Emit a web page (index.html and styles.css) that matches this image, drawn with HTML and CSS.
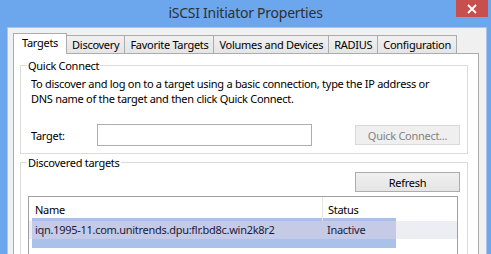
FILE: index.html
```html
<!DOCTYPE html>
<html lang="en">

<head>
    <meta charset="UTF-8">
    <meta name="viewport" content="width=device-width, initial-scale=1.0">
    <title>iSCSI Initiator Properties</title>
    <link rel="stylesheet" href="styles.css">
</head>

<body>
    <div class="window">
        <div class="titlebar">
            <span></span>
            <h1 class="title">iSCSI Initiator Properties</h1>
            <button class="close" aria-label="Close">
                <svg width="10" height="10" viewBox="0 0 10 10">
                    <path d="M1 1 L9 9 M9 1 L1 9" stroke="#fff" stroke-width="1.8" />
                </svg>
            </button>
        </div>

        <div class="client">
            <ul class="tabs">
                <li class="tab active">Targets</li>
                <li class="tab">Discovery</li>
                <li class="tab">Favorite Targets</li>
                <li class="tab">Volumes and Devices</li>
                <li class="tab">RADIUS</li>
                <li class="tab">Configuration</li>
            </ul>

            <div class="panel">
                <fieldset class="group quick">
                    <legend>Quick Connect</legend>
                    <p class="hint">To discover and log on to a target using a basic connection, type the IP address or<br>
                        DNS name of the target and then click Quick Connect.</p>
                    <div class="target-row">
                        <label for="target">Target:</label>
                        <input type="text" id="target">
                        <button class="btn" disabled>Quick Connect...</button>
                    </div>
                </fieldset>

                <fieldset class="group discovered">
                    <legend>Discovered targets</legend>
                    <div class="btn-row">
                        <button class="btn">Refresh</button>
                    </div>
                    <div class="list">
                        <div class="drag-box"></div>
                        <div class="list-row head">
                            <span class="col-name">Name</span>
                            <span class="col-status">Status</span>
                        </div>
                        <div class="list-row item">
                            <span class="col-name">iqn.1995-11.com.unitrends.dpu:flr.bd8c.win2k8r2</span>
                            <span class="col-status">Inactive</span>
                        </div>
                    </div>
                </fieldset>
            </div>
        </div>
    </div>
</body>

</html>
```

FILE: styles.css
```css
body {
    margin: 0;
    padding: 0;
    width: 491px;
    height: 254px;
    overflow: hidden;
    background-color: #6ca6ec;
    font-family: "Noto Sans", "Open Sans", sans-serif;
    font-size: 11px;
    letter-spacing: -0.28px;
    color: #000;
}

.window {
    display: flex;
    flex-direction: column;
    height: 254px;
    overflow: hidden;
}

.titlebar {
    display: grid;
    grid-template-columns: 1fr auto 1fr;
    align-items: start;
    height: 27px;
    flex-shrink: 0;
}

.title {
    margin: 0;
    padding-top: 3px;
    font-size: 14px;
    font-weight: normal;
    letter-spacing: -0.25px;
    line-height: 20px;
    color: #303030;
}

.close {
    justify-self: end;
    width: 32px;
    height: 17px;
    margin-right: 3px;
    padding: 0;
    border: none;
    background-color: #c7504f;
    display: flex;
    align-items: center;
    justify-content: center;
}

.client {
    flex: 1;
    min-height: 0;
    margin: 0 4px 0 7px;
    border: 1px solid #a9c3e4;
    border-bottom: none;
    background-color: #f0f0f0;
    padding: 5px 7px 0 5px;
    display: flex;
    flex-direction: column;
}

.tabs {
    list-style: none;
    margin: 0;
    padding: 0;
    display: flex;
    align-items: flex-end;
    height: 20px;
    flex-shrink: 0;
    position: relative;
    z-index: 1;
}

.tab {
    height: 17px;
    line-height: 18px;
    padding: 0 5px;
    border: 1px solid #acacac;
    border-bottom: none;
    border-left: none;
    background: linear-gradient(#f0f0f0, #e5e5e5);
    white-space: nowrap;
}

.tab.active {
    height: 20px;
    line-height: 18px;
    padding: 0 8px;
    border-left: 1px solid #acacac;
    background: #fff;
    margin-bottom: -1px;
}

.panel {
    flex: 1;
    min-height: 0;
    background-color: #fff;
    border: 1px solid #acacac;
    border-bottom: none;
    padding: 4px 10px 0 6px;
}

.group {
    margin: 0;
    border: 1px solid #dcdcdc;
    padding: 0 7px 7px 7px;
}

.group legend {
    padding: 0 1px;
    margin-left: -1px;
    line-height: 15px;
}

.hint {
    margin: 3px 0 0 3px;
    line-height: 15px;
}

.target-row {
    display: flex;
    align-items: center;
    margin-top: 18px;
}

.target-row label {
    width: 66px;
    padding-left: 3px;
}

.target-row input {
    width: 215px;
    height: 22px;
    box-sizing: border-box;
    border: 1px solid #abadb3;
    margin: 0;
}

.btn {
    width: 105px;
    height: 20px;
    margin-left: auto;
    padding: 0;
    font-family: inherit;
    font-size: 11px;
    letter-spacing: inherit;
    color: #000;
    border: 1px solid #acacac;
    background: linear-gradient(#f0f0f0, #e5e5e5);
}

.btn:disabled {
    color: #838383;
    border-color: #d9d9d9;
    background: #efefef;
}

.discovered {
    margin-top: 1px;
    padding-bottom: 0;
}

.btn-row {
    display: flex;
    margin-top: 2px;
}

.list {
    position: relative;
    margin: 4px 2px 0 0;
    height: 60px;
    border: 1px solid #a0a0a0;
    border-bottom: none;
}

.list-row {
    display: flex;
    position: relative;
    z-index: 1;
}

.head {
    height: 24px;
    line-height: 26px;
}

.head .col-name {
    border-right: 1px solid #e5e5e5;
}

.item {
    height: 18px;
    line-height: 18px;
    background-color: rgba(224, 226, 236, 0.6);
    color: #1a1a3a;
}

.col-name {
    width: 287px;
    padding-left: 6px;
    white-space: nowrap;
}

.col-status {
    padding-left: 5px;
}

.drag-box {
    position: absolute;
    left: 3px;
    top: 21px;
    width: 364px;
    height: 30px;
    background: linear-gradient(#aac0e8 3px, #9fa8df 3px, #9fa8df 21px, #aac2ea 21px);
}
```
